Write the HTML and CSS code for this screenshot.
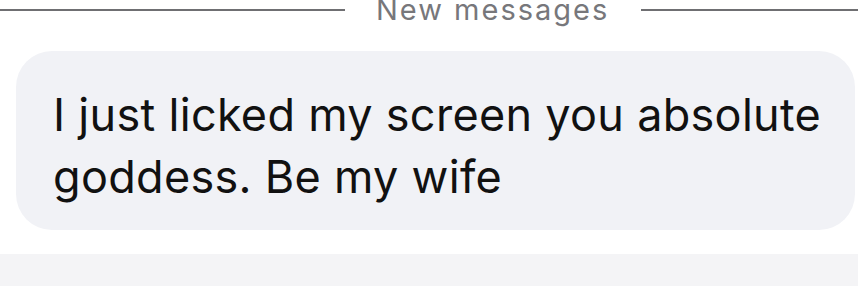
FILE: index.html
```html
<!DOCTYPE html>
<html lang="en">
<head>
	<meta charset="UTF-8">
	<title>chat</title>
	<link rel="stylesheet" href="styles.css">
</head>
<body>

	<div class="chat">
		<div class="divider">
			<span class="line line-left"></span>
			<span class="label">New messages</span>
			<span class="line line-right"></span>
		</div>

		<div class="bubble">
			<p class="msg">I just licked my screen you absolute goddess. Be my wife</p>
		</div>

		<div class="next-bubble"></div>
	</div>

</body>
</html>
```

FILE: styles.css
```css
*{
	margin: 0;
	padding: 0;
	box-sizing: border-box;
}
html, body{
	width: 858px;
	height: 286px;
	overflow: hidden;
	background: #fff;
}
body{
	font-family: Inter, "Liberation Sans", Arial, sans-serif;
}
.chat{
	display: flex;
	flex-direction: column;
}
.divider{
	display: flex;
	align-items: center;
	height: 34px;
	margin-top: -7px;
}
.divider .line{
	height: 2px;
	background-color: #6f6f72;
}
.divider .line-left{
	flex: 0 0 345px;
}
.divider .line-right{
	flex: 1;
}
.divider .label{
	font-size: 29px;
	line-height: 30px;
	letter-spacing: 2px;
	color: #77777b;
	padding: 0 32px 0 31px;
	white-space: nowrap;
}
.bubble{
	margin: 24px 3px 0 16px;
	height: 179px;
	border-radius: 36px;
	background-color: #f1f2f6;
	padding: 33px 14px 0 37px;
}
.msg{
	font-size: 45px;
	line-height: 62px;
	letter-spacing: 0.3px;
	color: #111;
}
.next-bubble{
	margin-top: 24px;
	height: 40px;
	background-color: #f4f4f6;
}
```
